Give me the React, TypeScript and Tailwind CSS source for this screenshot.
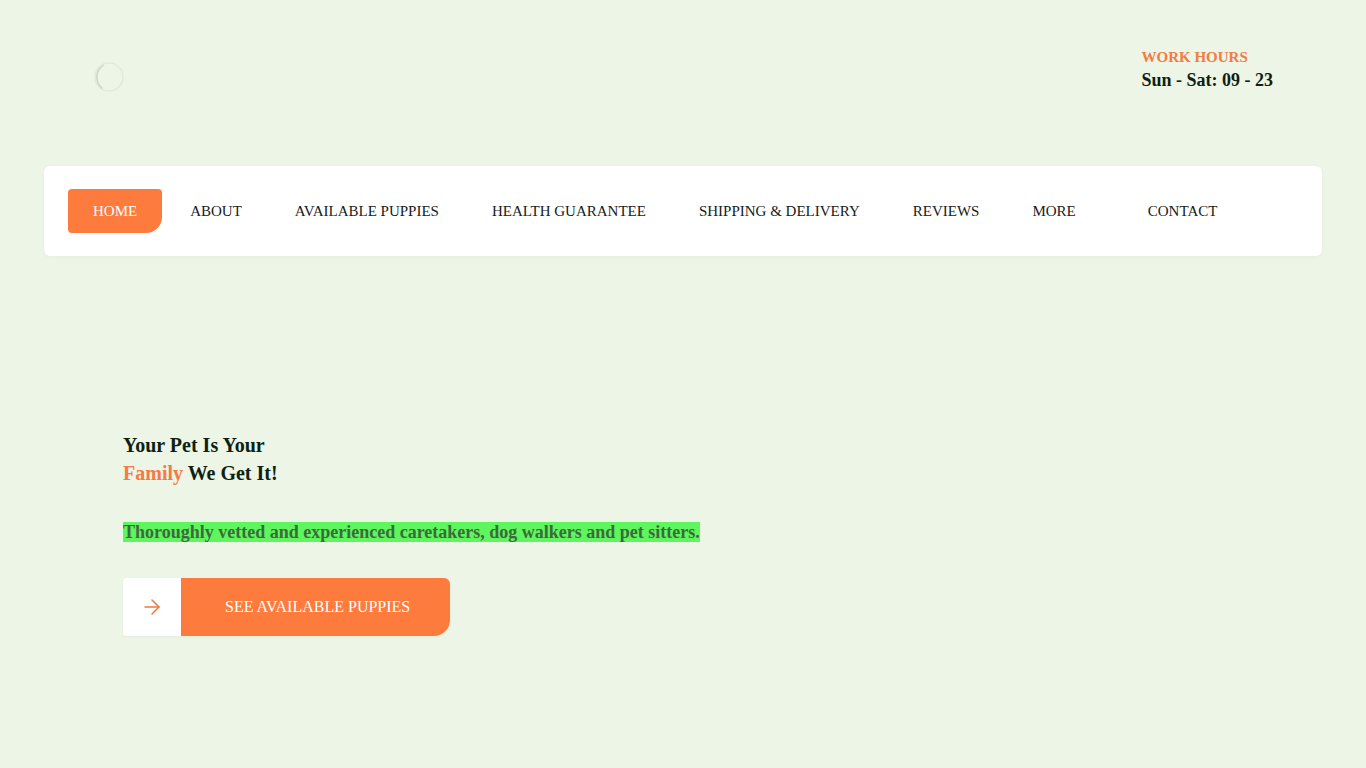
import React from 'react';
import { ArrowRight } from 'lucide-react';

const navItems = [
  'HOME',
  'ABOUT',
  'AVAILABLE PUPPIES',
  'HEALTH GUARANTEE',
  'SHIPPING & DELIVERY',
  'REVIEWS',
  'MORE',
  'CONTACT',
];

const serif = { fontFamily: '"Liberation Serif", "Times New Roman", serif' };

export default function App() {
  return (
    <div className="min-h-screen bg-[#ecf5e6] text-[#0f1f12]" style={serif}>
      {/* Top header */}
      <header className="flex items-start justify-between pl-[93px] pr-[93px] pt-[46px] h-[166px]">
        <div className="mt-[15px] w-[32px] h-[32px]">
          <svg viewBox="0 0 32 32" className="w-full h-full">
            <circle cx="16" cy="16" r="14" fill="none" stroke="#e2eadd" strokeWidth="1.5" />
            <path d="M10 4.5 A 14 14 0 0 0 9 27" fill="none" stroke="#cdd5c8" strokeWidth="1.5" strokeLinecap="round" />
          </svg>
        </div>
        <div className="flex flex-col">
          <span className="text-[15px] font-bold text-[#f47b42] leading-[22px]">WORK HOURS</span>
          <span className="text-[18px] font-bold leading-[24px]">Sun - Sat: 09 - 23</span>
        </div>
      </header>

      {/* Navigation */}
      <nav className="mx-[44px] h-[90px] bg-white rounded-[6px] shadow-[0_1px_4px_rgba(0,0,0,0.04)] flex items-center pl-[24px]">
        <ul className="flex items-center gap-[3px]">
          {navItems.map((item) => (
            <li key={item}>
              <a
                href="#"
                className={
                  item === 'HOME'
                    ? 'flex items-center h-[44px] px-[25px] bg-[#fd7b3d] text-white text-[15px] rounded-tl-[4px] rounded-tr-[4px] rounded-bl-[4px] rounded-br-[16px]'
                    : item === 'MORE'
                      ? 'flex items-center h-[44px] pl-[25px] pr-[44px] text-[15px] text-[#15201a]'
                      : 'flex items-center h-[44px] px-[25px] text-[15px] text-[#15201a]'
                }
              >
                {item}
              </a>
            </li>
          ))}
        </ul>
      </nav>

      {/* Hero */}
      <section className="pl-[123px] pt-[175px]">
        <h1 className="text-[20px] font-bold leading-[28px]">
          Your Pet Is Your
          <br />
          <span className="text-[#f47b42]">Family</span> We Get It!
        </h1>
        <p className="mt-[33px] text-[18px] font-bold leading-[24px]">
          <span className="bg-[#5ff55f] text-[#3b6b3b]">
            Thoroughly vetted and experienced caretakers, dog walkers and pet sitters.
          </span>
        </p>
        <div className="mt-[34px] flex">
          <a
            href="#"
            className="flex h-[58px] shadow-[0_1px_3px_rgba(0,0,0,0.04)] rounded-tr-[6px] rounded-br-[16px]"
          >
            <span className="w-[58px] h-[58px] bg-white flex items-center justify-center rounded-l-[4px] text-[#f0783e]">
              <ArrowRight className="w-[24px] h-[24px]" strokeWidth={1.5} />
            </span>
            <span className="flex items-center pl-[44px] pr-[40px] bg-[#fd7b3d] text-white text-[16px] rounded-tr-[6px] rounded-br-[16px]">
              SEE AVAILABLE PUPPIES
            </span>
          </a>
        </div>
      </section>
    </div>
  );
}
